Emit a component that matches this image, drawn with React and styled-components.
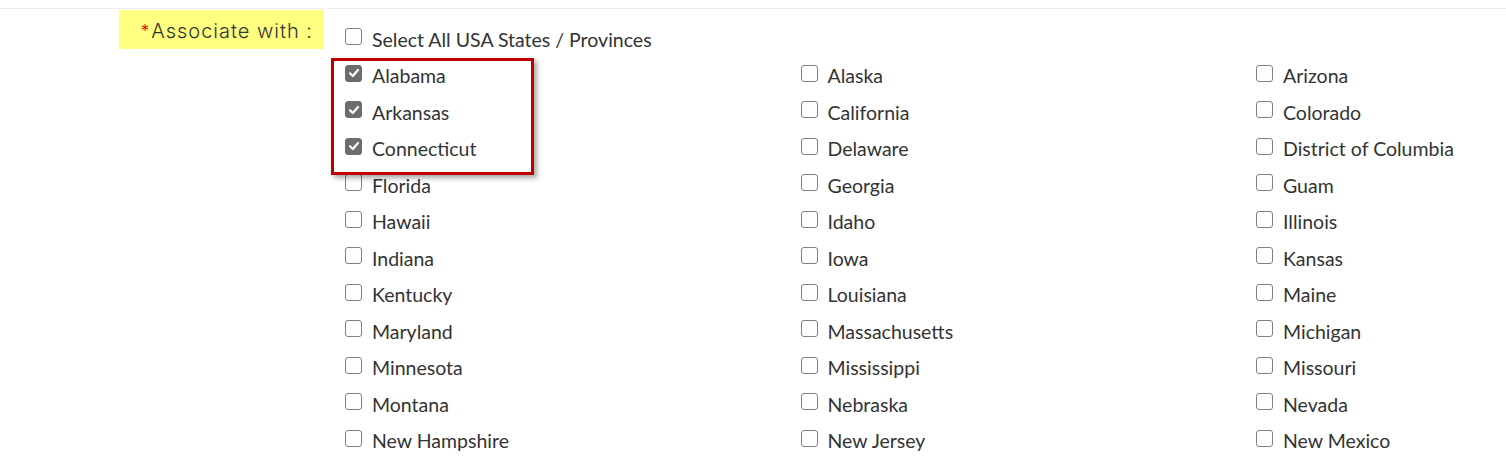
import React from 'react';
import styled, { createGlobalStyle } from 'styled-components';

const GlobalStyle = createGlobalStyle`
  body {
    margin: 0;
    background: #fff;
    font-family: 'Lato', 'Noto Sans', sans-serif;
  }
`;

const STATES = [
  'Alabama', 'Alaska', 'Arizona',
  'Arkansas', 'California', 'Colorado',
  'Connecticut', 'Delaware', 'District of Columbia',
  'Florida', 'Georgia', 'Guam',
  'Hawaii', 'Idaho', 'Illinois',
  'Indiana', 'Iowa', 'Kansas',
  'Kentucky', 'Louisiana', 'Maine',
  'Maryland', 'Massachusetts', 'Michigan',
  'Minnesota', 'Mississippi', 'Missouri',
  'Montana', 'Nebraska', 'Nevada',
  'New Hampshire', 'New Jersey', 'New Mexico',
];

const CHECKED = ['Alabama', 'Arkansas', 'Connecticut'];

const Page = styled.div`
  display: flex;
  gap: 3px;
  padding-top: 8px;
  height: 449px;
  overflow: hidden;
`;

const LabelCell = styled.div`
  flex: none;
  width: 205px;
  padding: 1px 0 0 119px;
  border-top: 1px solid #ebebeb;
`;

const FieldLabel = styled.div`
  background: #ffff80;
  height: 39px;
  padding: 3px 11px 0 0;
  display: flex;
  align-items: center;
  justify-content: flex-end;
  font-family: 'Inter', 'Open Sans', sans-serif;
  font-size: 20px;
  font-weight: 300;
  letter-spacing: 1px;
  color: #333;
  white-space: nowrap;
  box-sizing: border-box;
`;

const Required = styled.span`
  color: #d10000;
  font-size: 17px;
  margin-right: 1px;
`;

const OptionsCell = styled.div`
  flex: 1;
  border-top: 1px solid #ebebeb;
  padding: 12px 0 0 18px;
`;

const Grid = styled.div`
  position: relative;
  display: grid;
  grid-template-columns: repeat(3, 455.5px);
`;

const Item = styled.label`
  display: flex;
  align-items: center;
  gap: 10px;
  height: 36.5px;
  font-size: 19.5px;
  color: #333;
  white-space: nowrap;
`;

const Box = styled.span`
  flex: none;
  width: 17px;
  height: 17px;
  box-sizing: border-box;
  border-radius: 3px;
  margin-top: -5px;
  border: 1.5px solid ${(p) => (p.$checked ? '#6d6d6d' : '#808080')};
  background: ${(p) => (p.$checked ? '#6d6d6d' : '#fff')};
  display: flex;
  align-items: center;
  justify-content: center;
`;

const Highlight = styled.div`
  position: absolute;
  left: -14px;
  top: 0;
  width: 203px;
  height: 117px;
  box-sizing: border-box;
  border: 3px solid #c00000;
  box-shadow: 3px 3px 5px rgba(0, 0, 0, 0.35);
  pointer-events: none;
`;

const Check = ({ checked }) => (
  <Box $checked={checked}>
    {checked && (
      <svg width="12" height="12" viewBox="0 0 12 12">
        <path d="M2 6.3 L4.8 9 L10 3" fill="none" stroke="#fff" strokeWidth="2.2" strokeLinecap="round" strokeLinejoin="round" />
      </svg>
    )}
  </Box>
);

const Option = ({ name, checked }) => (
  <Item>
    <Check checked={checked} />
    {name}
  </Item>
);

const App = () => (
  <>
    <GlobalStyle />
    <Page>
      <LabelCell>
        <FieldLabel>
          <Required>*</Required>Associate with :
        </FieldLabel>
      </LabelCell>
      <OptionsCell>
        <Option name="Select All USA States / Provinces" />
        <Grid>
          {STATES.map((s) => (
            <Option key={s} name={s} checked={CHECKED.includes(s)} />
          ))}
          <Highlight />
        </Grid>
      </OptionsCell>
    </Page>
  </>
);

export default App;
